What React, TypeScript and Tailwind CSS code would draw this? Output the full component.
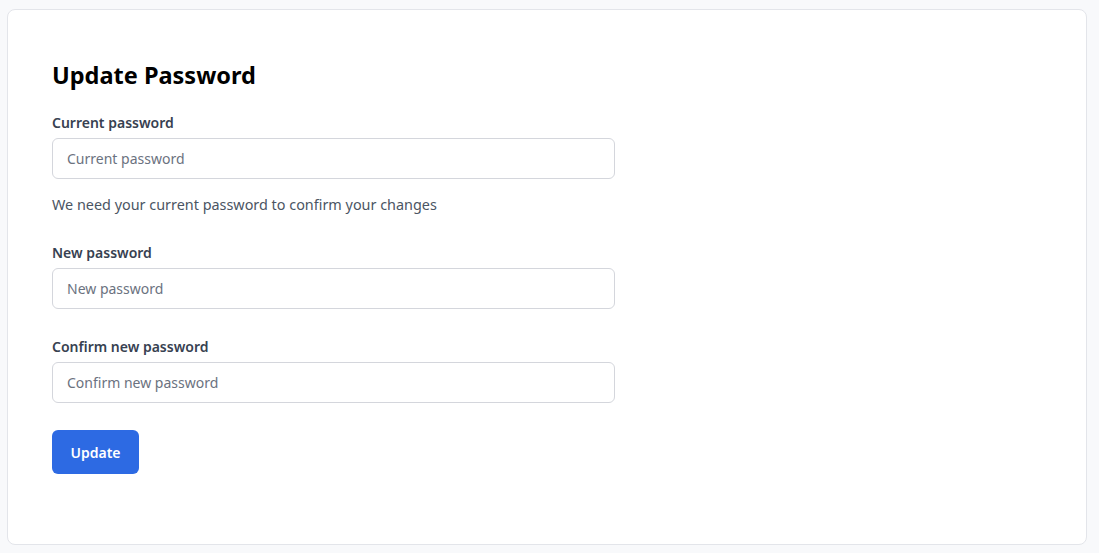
import React from "react";

function Field({ label, placeholder, className = "" }: { label: string; placeholder: string; className?: string }) {
  return (
    <div className={className}>
      <label className="block text-[14px] leading-5 font-semibold text-[#374151]">{label}</label>
      <input
        type="password"
        placeholder={placeholder}
        className="mt-[5px] block w-[563px] h-[41px] rounded-md border border-[#d4d6dc] bg-white px-[14px] text-[14px] text-[#111827] placeholder:text-[#6b7280] focus:outline-none"
      />
    </div>
  );
}

export default function App() {
  return (
    <div
      className="min-h-[553px] bg-[#f8f9fb] pt-[9px] pl-[7px] pr-[12px] pb-[8px]"
      style={{ fontFamily: '"Noto Sans", "Open Sans", sans-serif' }}
    >
      <div className="h-[536px] rounded-lg border border-[#e3e5ea] bg-white pl-[44px] pt-[49px]">
        <h1 className="text-[23.5px] leading-8 font-bold text-black">Update Password</h1>
        <Field className="mt-[22px]" label="Current password" placeholder="Current password" />
        <p className="mt-[16px] text-[14.4px] leading-5 text-[#4b5563]">We need your current password to confirm your changes</p>
        <Field className="mt-[28px]" label="New password" placeholder="New password" />
        <Field className="mt-[28px]" label="Confirm new password" placeholder="Confirm new password" />
        <button className="mt-[27px] h-[44px] w-[87px] rounded-md bg-[#2d6ae3] text-[14px] font-semibold text-white">
          Update
        </button>
      </div>
    </div>
  );
}
